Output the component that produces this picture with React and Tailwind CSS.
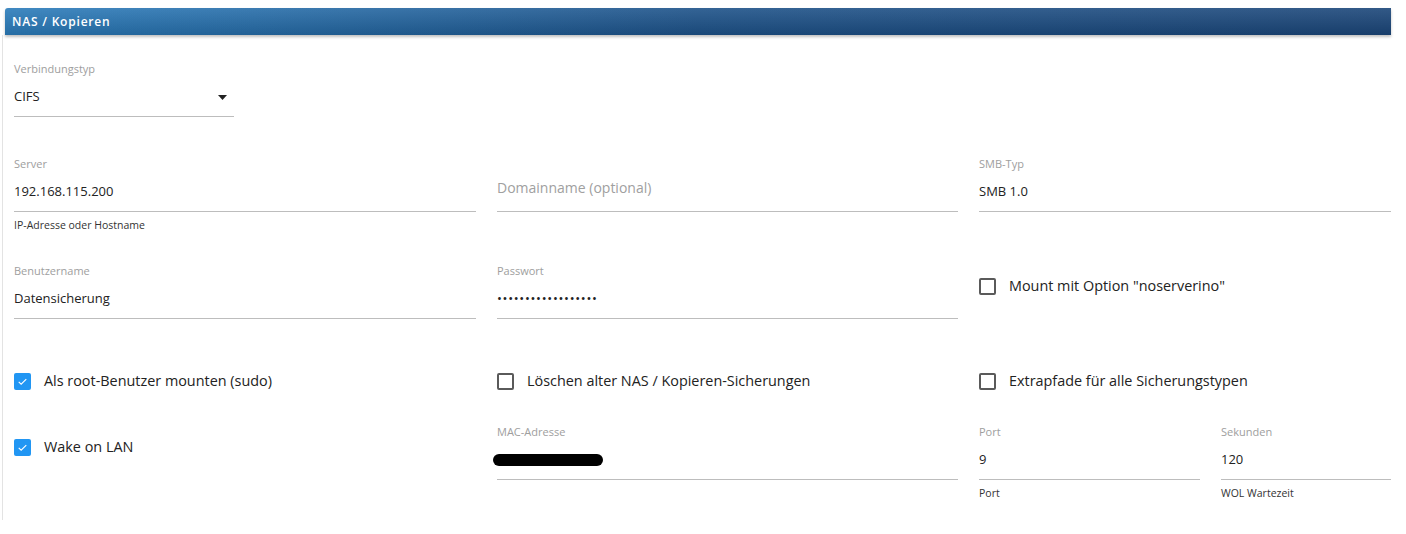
import React from "react";

const font = { fontFamily: '"Open Sans", "Liberation Sans", sans-serif' };

// simple underlined field with small label on top
const Field = ({ label, value, placeholder, helper, children }) => (
  <div className="flex flex-col">
    <div className="h-[14px] text-[11px] leading-[14px] text-[#9e9e9e]">{label}</div>
    <div className="mt-[11px] h-[20px] flex items-center text-[13px] text-[#222]">
      {children ? children : value ? value : <span className="text-[14px] text-[#a0a0a0] -mt-[10px]">{placeholder}</span>}
    </div>
    <div className="mt-[9px] border-b border-[#bdbdbd]" />
    {helper && (
      <div className="mt-[6px] h-[14px] text-[10.5px] leading-[14px] text-[#333]">{helper}</div>
    )}
  </div>
);

const Checkbox = ({ checked, label }) => (
  <div className="flex items-center h-[20px] gap-[13px]">
    {checked ? (
      <div className="w-[17px] h-[17px] rounded-[2px] bg-[#2196f3] flex items-center justify-center">
        <svg width="13" height="13" viewBox="0 0 24 24" fill="none" stroke="white" strokeWidth="2">
          <path d="M5 12.5l4.5 4.5L19 7.5" />
        </svg>
      </div>
    ) : (
      <div className="w-[17px] h-[17px] rounded-[2px] border-2 border-[#5a5a5a] bg-white" />
    )}
    <span className="text-[14.4px] text-[#222]">{label}</span>
  </div>
);

const App = () => {
  return (
    <div className="w-[1406px] h-[534px] bg-white overflow-hidden pt-[8px]" style={font}>
      {/* header bar */}
      <div className="ml-[5px] w-[1386px] h-[27px] rounded-tl-[3px] flex items-center pl-[7px] text-white text-[12px] font-semibold tracking-[0.8px] shadow-[0_2px_3px_rgba(0,0,0,0.25)] bg-[linear-gradient(to_bottom,rgba(255,255,255,0.1),rgba(0,0,0,0.12)),linear-gradient(to_right,#2b7cbb,#1d5289_50%,#1b4679)]">
        NAS / Kopieren
      </div>

      {/* panel body */}
      <div className="ml-[2px] h-[485px] border-l border-[#e3e3e3] pl-[11px] pt-[27px]">
        {/* Verbindungstyp */}
        <div className="w-[220px]">
          <Field label="Verbindungstyp">
            <div className="flex w-full items-center justify-between pr-[7px]">
              <span>CIFS</span>
              <svg width="9" height="5" viewBox="0 0 9 5">
                <polygon points="0,0 9,0 4.5,5" fill="#222" />
              </svg>
            </div>
          </Field>
        </div>

        {/* Server / Domain / SMB */}
        <div className="mt-[40px] grid grid-cols-[462px_461px_412px] gap-x-[21px] items-start">
          <Field label="Server" value="192.168.115.200" helper="IP-Adresse oder Hostname" />
          <Field label="" placeholder="Domainname (optional)" />
          <Field label="SMB-Typ" value="SMB 1.0" />
        </div>

        {/* Benutzer / Passwort / noserverino */}
        <div className="mt-[32px] grid grid-cols-[462px_461px_412px] gap-x-[21px] items-start">
          <Field label="Benutzername" value="Datensicherung" />
          <Field label="Passwort">
            <span className="text-[13px] tracking-[0.7px]">••••••••••••••••••</span>
          </Field>
          <div className="mt-[12px]">
            <Checkbox label={'Mount mit Option "noserverino"'} />
          </div>
        </div>

        {/* checkbox row */}
        <div className="mt-[52px] grid grid-cols-[462px_461px_412px] gap-x-[21px]">
          <Checkbox checked label="Als root-Benutzer mounten (sudo)" />
          <Checkbox label="Löschen alter NAS / Kopieren-Sicherungen" />
          <Checkbox label="Extrapfade für alle Sicherungstypen" />
        </div>

        {/* WOL row */}
        <div className="mt-[34px] grid grid-cols-[462px_461px_412px] gap-x-[21px] items-start">
          <div className="mt-[12px]">
            <Checkbox checked label="Wake on LAN" />
          </div>
          <Field label="MAC-Adresse">
            <div className="-ml-[4px] w-[110px] h-[12px] rounded-full bg-black" />
          </Field>
          <div className="grid grid-cols-[221px_170px] gap-x-[21px]">
            <Field label="Port" value="9" helper="Port" />
            <Field label="Sekunden" value="120" helper="WOL Wartezeit" />
          </div>
        </div>
      </div>
    </div>
  );
};

export default App;
